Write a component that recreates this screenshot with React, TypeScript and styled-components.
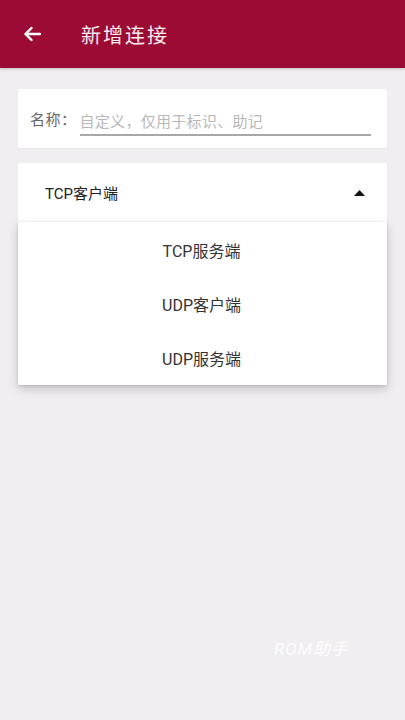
import React from "react"
import styled, { createGlobalStyle } from "styled-components"

const GlobalStyle = createGlobalStyle`
  html, body {
    margin: 0;
    padding: 0;
    background: #f0eef1;
    font-family: Roboto, "Noto Sans CJK SC", sans-serif;
  }
`

const Screen = styled.div`
  position: relative;
  width: 405px;
  height: 720px;
  background: #f0eef1;
  overflow: hidden;
`

const Toolbar = styled.div`
  display: flex;
  align-items: center;
  height: 68px;
  background: #9c0b34;
  color: #fff;
  box-shadow: 0 1px 3px rgba(0, 0, 0, 0.2);
`

const BackButton = styled.div`
  display: flex;
  align-items: center;
  justify-content: center;
  width: 64px;
  height: 68px;
`

const Title = styled.div`
  font-size: 20px;
  margin-left: 17px;
  letter-spacing: 2px;
  color: #fbeef2;
`

const Content = styled.div`
  display: flex;
  flex-direction: column;
  gap: 15px;
  padding: 21px 18px 0 18px;
`

const Card = styled.div`
  background: #fff;
  border-radius: 2px;
  box-shadow: 0 1px 2px rgba(0, 0, 0, 0.04);
`

const NameCard = styled(Card)`
  display: flex;
  align-items: center;
  height: 59px;
  padding: 0 16px 0 12px;
`

const Label = styled.span`
  font-size: 15px;
  color: #666;
  margin-right: 3px;
  letter-spacing: 0.5px;
`

const Input = styled.div`
  flex: 1;
  font-size: 15px;
  color: #b8b8b8;
  padding: 4px 0 3px 0;
  border-bottom: 2px solid #a8a8a8;
  margin-top: 4px;
  letter-spacing: 0.3px;
`

const SpinnerWrap = styled.div`
  position: relative;
`

const Spinner = styled(Card)`
  display: flex;
  align-items: center;
  justify-content: space-between;
  height: 59px;
  padding: 0 22px 0 27px;
  font-size: 15px;
  color: #222;
`

const Menu = styled.div`
  position: absolute;
  top: 59px;
  left: 0;
  right: 0;
  background: #fff;
  display: flex;
  flex-direction: column;
  padding: 1px 0 0 0;
  box-shadow: 0 4px 10px rgba(0, 0, 0, 0.18), 0 1px 3px rgba(0, 0, 0, 0.12);
`

const MenuItem = styled.div`
  height: 54px;
  display: flex;
  align-items: center;
  justify-content: center;
  font-size: 16px;
  color: #333;
  padding-right: 2px;
`

const Watermark = styled.div`
  position: absolute;
  left: 274px;
  top: 635px;
  font-size: 17px;
  letter-spacing: 1px;
  font-style: italic;
  color: #ffffff;
  opacity: 0.9;
`

export default function App() {
  return (
    <Screen>
      <GlobalStyle />
      <Toolbar>
        <BackButton>
          <svg width="18" height="16" viewBox="0 0 18 16">
            <path
              d="M17 8H2.5M8.5 2L2.5 8l6 6"
              stroke="#fff"
              strokeWidth="2.4"
              fill="none"
              strokeLinecap="round"
              strokeLinejoin="round"
            />
          </svg>
        </BackButton>
        <Title>新增连接</Title>
      </Toolbar>
      <Content>
        <NameCard>
          <Label>名称：</Label>
          <Input>自定义，仅用于标识、助记</Input>
        </NameCard>
        <SpinnerWrap>
          <Spinner>
            <span>TCP客户端</span>
            <svg width="11" height="6" viewBox="0 0 11 6">
              <path d="M0 6L5.5 0L11 6Z" fill="#111" />
            </svg>
          </Spinner>
          <Menu>
            <MenuItem>TCP服务端</MenuItem>
            <MenuItem>UDP客户端</MenuItem>
            <MenuItem>UDP服务端</MenuItem>
          </Menu>
        </SpinnerWrap>
      </Content>
      <Watermark>ROM助手</Watermark>
    </Screen>
  )
}
